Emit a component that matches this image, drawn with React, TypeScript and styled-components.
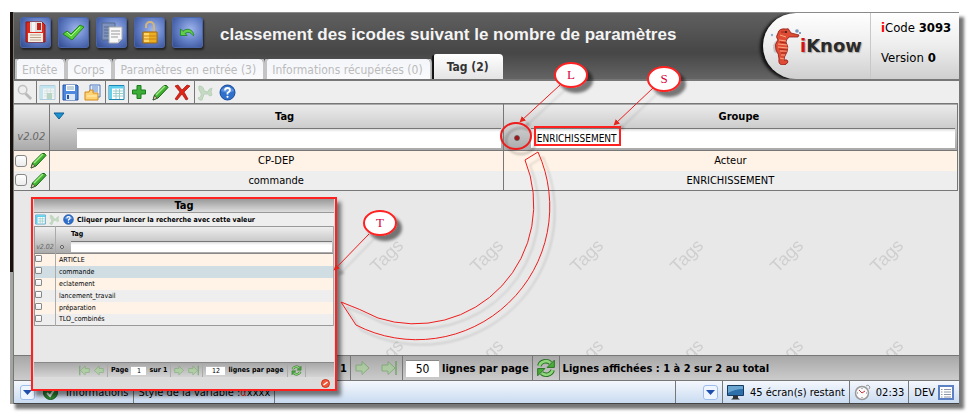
import React from "react";
import styled, { createGlobalStyle, css } from "styled-components";

const UI = '"DejaVu Sans Condensed", "DejaVu Sans", sans-serif';
const LINE = "#777777";

const GlobalStyle = createGlobalStyle`
  *, *::before, *::after { box-sizing: border-box; }
  body { margin: 0; background: #fff; font-family: ${UI}; font-size: 11px; color: #000; }
  button { font: inherit; padding: 0; border: 0; background: none; cursor: pointer; }
  input { font: inherit; margin: 0; }
  svg { display: block; flex: none; }
`;

const Page = styled.main`
  position: relative;
  display: flex;
  min-height: 100vh;
  padding: 12px 15px 14px 10px;
  overflow: hidden;
`;

const Frame = styled.div`
  flex: 1;
  display: flex;
  min-width: 0;
  padding-left: 3px;
  background: linear-gradient(#17100d 0 260px, #a3a5a3 260px);
  box-shadow: 5px 5px 3px #777;
`;

const Window = styled.div`
  flex: 1;
  display: flex;
  flex-direction: column;
  min-width: 0;
  background: #e8e8e8;
  border-left: 1px solid ${LINE};
`;

const Header = styled.header`
  display: flex;
  height: 67px;
  background: linear-gradient(#606060, #464646 60%, #646464);
  border-top: 1px solid #8a8a8a;
`;

const HeaderMain = styled.div`
  flex: 1;
  display: flex;
  flex-direction: column;
  justify-content: space-between;
  min-width: 0;
`;

const Actions = styled.div`
  display: flex;
  align-items: center;
  gap: 7px;
  padding: 4px 0 0 6px;
`;

const ActionButton = styled.button`
  display: grid;
  place-items: center;
  width: 31px;
  height: 31px;
  border-radius: 3px;
  border: 1px solid #4a65a8;
  background: radial-gradient(circle at 60% 40%, #a0b6ec, #6682c8 45%, #30498f);
  box-shadow: 1px 2px 2px #222;
`;

const Title = styled.h1`
  margin: 0 0 0 10px;
  padding-top: 4px;
  font: bold 17px/24px "Liberation Sans", Arial, sans-serif;
  color: #f4f4f4;
  white-space: nowrap;
`;

const Tabs = styled.nav`
  display: flex;
  align-items: flex-end;
  gap: 4px;
  padding-left: 3px;
`;

const Tab = styled.button<{ $active?: boolean }>`
  height: 20px;
  padding: 0 7px 0 5px;
  border-radius: 2px 4px 0 0;
  background: linear-gradient(#f3f5f9, #fbfbfd);
  box-shadow: 0 0 0 2px #c4c4c4;
  clip-path: inset(0 -4px 0 -3px);
  color: #bbb;
  font-family: ${UI};
  font-size: 12px;
  line-height: 22px;
  white-space: nowrap;
  ${(p) =>
    p.$active &&
    css`
      height: 25px;
      padding: 0 14px 0 13px;
      background: linear-gradient(#fff, #e4e4e4);
      box-shadow: -2px 1px 1px #111;
      color: #333;
      font-weight: bold;
      line-height: 24px;
    `}
`;

const Brand = styled.div`
  display: flex;
  align-items: center;
  width: 107px;
  padding-left: 7px;
  border-radius: 33px 0 0 33px;
  background: linear-gradient(#fff, #ededed 50%, #cfcfcf);
  box-shadow: -3px 1px 3px #111;
  clip-path: inset(0 0 0 -8px);
`;

const BrandName = styled.strong`
  font: bold 18px/24px "DejaVu Sans", Verdana, sans-serif;
  color: #2b2b2b;
  margin-left: -1px;
  text-shadow: 1px 1px 1px #aaa;
  b { color: #d31318; }
`;

const Meta = styled.div`
  display: flex;
  flex-direction: column;
  gap: 12px;
  width: 89px;
  padding: 6px 0 0 10px;
  border-left: 1px solid #c8c8c8;
  background: linear-gradient(#fff, #ededed 50%, #cfcfcf);
  line-height: 18px;
  font-size: 13px;
  white-space: nowrap;
  em { font-style: normal; font-weight: bold; color: #f00; }
`;

const Toolbar = styled.div`
  display: flex;
  height: 24px;
  border-top: 2px solid ${LINE};
  background: #eee;
`;

const ToolGroup = styled.div<{ $last?: boolean }>`
  display: flex;
  align-items: center;
  gap: 5px;
  padding: 0 3px 0 2px;
  border-right: ${(p) => (p.$last ? "0" : `1px solid ${LINE}`)};
`;

const IconButton = styled.button<{ $faded?: boolean }>`
  display: grid;
  place-items: center;
  flex: none;
  opacity: ${(p) => (p.$faded ? 0.3 : 1)};
`;

const DataTable = styled.table`
  width: calc(100% - 1px);
  table-layout: fixed;
  border-collapse: collapse;
  border-bottom: 1px solid ${LINE};
  th, td { padding: 0; border-right: 1px solid ${LINE}; }
`;

const NarrowCol = styled.col`
  width: 35px;
`;

const HeadRow = styled.tr`
  height: 47px;
  background: linear-gradient(#ebebeb, #d0d0d0 45%, #aaa);
  border-top: 1px solid ${LINE};
  border-bottom: 1px solid ${LINE};
`;

const VersionCell = styled.th`
  vertical-align: bottom;
  font-weight: normal;
  font-style: italic;
  color: #666;
  line-height: 26px;
`;

const HeadTitle = styled.div`
  display: grid;
  grid-template-columns: 24px 1fr 10px;
  align-items: center;
  height: 23px;
  padding-left: 3px;
`;

const HeadFilter = styled.div`
  display: grid;
  grid-template-columns: 27px 1fr;
  align-items: center;
  padding-right: 2px;
  padding-bottom: 2px;
`;

const FilterInput = styled.input`
  width: 100%;
  height: 20px;
  padding: 0 0 0 6px;
  border: 0;
  border-top: 1px solid #777;
  border-radius: 0;
  background: linear-gradient(#ddd, #fff 3px);
  font-weight: normal;
  font-size: 10px;
`;

const BodyRow = styled.tr<{ $tinted?: boolean }>`
  height: 20px;
  background: ${(p) => (p.$tinted ? "#fff2e6" : "#eee")};
  text-align: center;
`;

const RowTools = styled.div`
  display: flex;
  align-items: center;
  gap: 3px;
  padding-left: 1px;
`;

const CheckBox = styled.input<{ $small?: boolean }>`
  appearance: none;
  width: ${(p) => (p.$small ? 7 : 12)}px;
  height: ${(p) => (p.$small ? 7 : 12)}px;
  border: 1px solid #888;
  border-radius: ${(p) => (p.$small ? 1 : 3)}px;
  background: linear-gradient(#fff, #ececec);
`;

const Canvas = styled.section`
  flex: 1;
  position: relative;
  min-height: 120px;
`;

const Watermark = styled.svg`
  position: absolute;
  inset: 0;
  width: 100%;
  height: 100%;
`;

const Pager = styled.div`
  display: flex;
  height: 25px;
  border-top: 1px solid ${LINE};
  background: linear-gradient(#a8a8a8, #ccc);
  font-weight: bold;
`;

const PagerCell = styled.div<{ $lead?: boolean; $last?: boolean }>`
  display: flex;
  align-items: center;
  justify-content: flex-end;
  gap: ${(p) => (p.$lead ? 0 : 3)}px;
  width: ${(p) => (p.$lead ? "337px" : "auto")};
  padding: 0 3px;
  border-right: ${(p) => (p.$last ? "0" : `1px solid ${LINE}`)};
  white-space: nowrap;
`;

const ArrowPair = styled.div`
  display: flex;
  gap: 10px;
  padding: 0 2px 0 1px;
`;

const CountInput = styled.input<{ $small?: boolean; $narrow?: boolean }>`
  width: 33px;
  height: 17px;
  border: 0;
  border-top: 1px solid #888;
  background: #fff;
  text-align: center;
  padding: 0;
  font-weight: normal;
  font-size: 12px;
  ${(p) =>
    p.$small &&
    css`
      width: ${p.$narrow ? 15 : 19}px;
      height: 9px;
      font-size: 7px;
      border-top-color: #bbb;
    `}
`;

const StatusBar = styled.footer`
  display: flex;
  height: 24px;
  border-top: 1px solid #777;
  border-bottom: 1px solid #444;
  background: linear-gradient(#f5f8fd, #c9dbf1);
`;

const StatusCell = styled.div<{ $grow?: boolean; $last?: boolean; $gap?: number; $pad?: string }>`
  display: flex;
  align-items: center;
  gap: ${(p) => p.$gap ?? 5}px;
  flex: ${(p) => (p.$grow ? "1" : "none")};
  padding: ${(p) => p.$pad ?? "0 4px"};
  border-right: ${(p) => (p.$last ? "0" : `1px solid ${LINE}`)};
  white-space: nowrap;
`;

const DropButton = styled.button`
  display: grid;
  place-items: center;
  width: 15px;
  height: 15px;
  border: 1px solid #9dbdec;
  border-radius: 3px;
  background: #eef5ff;
`;

const Variable = styled.span`
  color: #d22;
`;

const Popup = styled.section`
  position: absolute;
  left: 31px;
  top: 197px;
  width: 306px;
  padding: 0 1px;
  border: 2px solid #ff2020;
  background: #dcdcdc;
  box-shadow: 4px 5px 4px rgba(0, 0, 0, 0.5);
  font-size: 7px;
`;

const PopupTitle = styled.h2`
  margin: 0;
  font-size: 11px;
  line-height: 13px;
  text-align: center;
  background: linear-gradient(#999, #ddd);
`;

const PopupTools = styled.div`
  display: flex;
  align-items: center;
  gap: 3px;
  height: 14px;
  padding-left: 1px;
  border-top: 1px solid #999;
  background: #eee;
  font-weight: bold;
  white-space: nowrap;
`;

const PopupTable = styled(DataTable)`
  width: 100%;
  border: 1px solid #999;
  th, td { border-right-color: #aaa; }
  th { font-weight: normal; }
`;

const PopupNarrowCol = styled.col`
  width: 21px;
`;

const PopupHead = styled.tr`
  height: 27px;
  background: linear-gradient(#eee, #aaa);
  border-bottom: 1px solid #888;
`;

const PopupVersion = styled(VersionCell)`
  line-height: 12px;
`;

const PopupFilter = styled.div`
  display: grid;
  grid-template-columns: 10px 1fr;
  align-items: center;
  justify-items: center;
  gap: 0 4px;
  padding: 0 1px 1px 1px;
  strong { grid-column: 2; justify-self: start; line-height: 14px; }
  input { height: 11px; }
`;

const PopupRow = styled.tr<{ $tone: "peach" | "blue" | "grey" }>`
  height: 12px;
  background: ${(p) => ({ peach: "#fff2e6", blue: "#d0dde2", grey: "#eee" })[p.$tone]};
  td:last-child { padding-left: 3px; }
`;

const PopupBlank = styled.div`
  height: 36px;
  background: #e8e8e8;
`;

const PopupPager = styled.div`
  display: flex;
  align-items: center;
  height: 15px;
  gap: 3px;
  padding-left: 45px;
  border-top: 1px solid #888;
  background: linear-gradient(#a8a8a8, #d4d4d4);
  font-weight: bold;
  white-space: nowrap;
`;

const PopupSep = styled.i`
  width: 1px;
  height: 13px;
  background: #aaa;
`;

const PopupFoot = styled.div`
  display: flex;
  justify-content: flex-end;
  align-items: center;
  height: 12px;
  padding-right: 4px;
`;

const Notes = styled.svg`
  position: absolute;
  left: 0;
  top: 0;
  pointer-events: none;
`;

const FloppyRed = () => (
  <svg width="23" height="23" viewBox="0 0 23 23">
    <path d="M2 1h16l3 3v17H2z" fill="#d92b20" stroke="#93170f" />
    <path d="M6 1h12v10H6z" fill="#ddd" />
    <path d="M8 1h3v10H8z" fill="#f5f5f5" />
    <path d="M13 2h4v7h-4z" fill="#c0241a" />
    <path d="M4 12h15v9H4z" fill="#f6eee3" />
    <path d="M6 14h11M6 16.500h11M6 19h11" stroke="#baa48e" />
  </svg>
);
const Check = () => (
  <svg width="23" height="20" viewBox="0 0 23 20">
    <path d="M1 11l4-3 4 3 9-9 4 2-12 13z" fill="#58d13b" stroke="#21851a" />
    <path d="M5 9l4 4 9-9" fill="none" stroke="#b4f39d" />
  </svg>
);
const Copy = () => (
  <svg width="24" height="24" viewBox="0 0 24 24">
    <path d="M2 2h13v17H2z" fill="#7d93bd" stroke="#56698f" />
    <path d="M4 6h9M4 9h9M4 12h5M4 15h5" stroke="#5a6d93" />
    <path d="M9 6h13v12l-4 4H9z" fill="#f8f8f8" stroke="#aaa" />
    <path d="M11 10h9M11 13h9M11 16h7" stroke="#999" />
    <path d="M22 18h-4v4z" fill="#ccc" />
  </svg>
);
const Lock = () => (
  <svg width="18" height="24" viewBox="0 0 18 24">
    <path d="M5 7V5a4 4 0 018 0v6" fill="none" stroke="#d3b57a" strokeWidth="2" />
    <path d="M2 11h14v11H2z" fill="#eeae21" stroke="#9e670b" />
    <path d="M3 12h5v9H3z" fill="#ffd768" />
    <path d="M2 15h14M2 18h14" stroke="#c98412" />
  </svg>
);
const Undo = () => (
  <svg width="17" height="10" viewBox="0 0 19 12">
    <path d="M1 1v8h8L6.500 6.500Q12 3 16 9q1 1 1-1-2-7-8-6.500Q6 2 4 4z" fill="#62cf49" stroke="#1e7f2a" />
  </svg>
);
const Magnifier = () => (
  <svg width="17" height="17" viewBox="0 0 18 18">
    <circle cx="7" cy="6" r="4.500" fill="#eee" stroke="#555" strokeWidth="1.500" />
    <path d="M10 10l6 6" stroke="#444" strokeWidth="3" />
  </svg>
);
const Grid = ({ size = 17, save = false }: { size?: number; save?: boolean }) => (
  <svg width={size} height={size} viewBox="0 0 17 17">
    <path d="M1 1.500h15v14H1z" fill="#fff" stroke="#1e87b4" />
    <path d="M1.500 2h14v2.500h-14zM1.500 2H4v13H1.500z" fill="#5fd0ee" />
    <path d="M5 7h10M5 9.500h10M5 12h10M8 5v10M11.500 5v10" stroke="#9cc" />
    {save && <path d="M8 9h5v6H8z" fill="#3b9a6a" />}
  </svg>
);
const FloppyBlue = () => (
  <svg width="17" height="17" viewBox="0 0 17 17">
    <path d="M1 1h14l1 1v14H1z" fill="#4d87de" stroke="#2755a5" />
    <path d="M4 1h9v6H4z" fill="#fff" />
    <path d="M5 3h7M5 5h7" stroke="#8ab" />
    <path d="M4 10h9v6H4z" fill="#dce6f3" />
    <path d="M5 11h2v4H5z" fill="#2755a5" />
  </svg>
);
const FolderDoc = () => (
  <svg width="18" height="17" viewBox="0 0 18 17">
    <path d="M6 1h10v12H6z" fill="#e8f1ff" stroke="#4c78bd" />
    <path d="M8 3h6M8 5h6M8 7h6" stroke="#5c8ace" />
    <path d="M1 8h4l1-2h3v3h5v7H1z" fill="#ffd274" stroke="#d4881d" />
    <path d="M3 12h10" stroke="#fff0bd" />
  </svg>
);
const Plus = () => (
  <svg width="16" height="16" viewBox="0 0 16 16">
    <path d="M6 1.500h4v4.500h4.500v4H10v4.500H6V10H1.500V6H6z" fill="#3cae36" stroke="#1b7d20" />
  </svg>
);
const Pencil = () => (
  <svg width="17" height="17" viewBox="0 0 17 17">
    <path d="M1 16l1.500-5L12 1.500Q15 .5 16 3.500L6 14z" fill="#42b330" stroke="#12600f" />
    <path d="M4 11l9-9" stroke="#a1ec85" strokeWidth="1.500" />
    <path d="M1 16l1.500-4L5 14z" fill="#f0dcb8" stroke="#333" strokeWidth=".6" />
  </svg>
);
const Cross = () => (
  <svg width="17" height="17" viewBox="0 0 17 17">
    <path d="M1 2l3-1 4 5 5-5 3 1-6 6 4 7-2 1-4-6-5 6-2-1 5-7z" fill="#e02418" stroke="#9a120c" strokeWidth=".7" />
  </svg>
);
const Wrench = ({ size = 17 }: { size?: number }) => (
  <svg width={size} height={size} viewBox="0 0 17 17">
    <path d="M2 2q5 0 5 5l4 1q0-3 4-4-2 4 0 7l-2 1q-2-3-6-2l-2 6q-3 1-4-2 4-1 3-5-3-3-2-7z" fill="#68ad5c" stroke="#388a42" />
  </svg>
);
const Help = ({ size = 17 }: { size?: number }) => (
  <svg width={size} height={size} viewBox="0 0 17 17">
    <circle cx="8.500" cy="8.500" r="7.500" fill="#2f70cc" stroke="#16489b" />
    <path d="M2 7a7 6 0 0113 0q-6 3-13 0z" fill="#78aaee" opacity=".6" />
    <path d="M6 6.500q0-2.500 2.500-2.500T11 6.300Q11 7.600 8.500 9v1.500" fill="none" stroke="#fff" strokeWidth="1.800" />
    <circle cx="8.500" cy="12.800" r="1.100" fill="#fff" />
  </svg>
);
const SortDown = () => (
  <svg width="12" height="8" viewBox="0 0 12 8">
    <path d="M1 1h10L6 7z" fill="#1d93d2" stroke="#0b5f96" />
  </svg>
);
const Dot = ({ small = false }: { small?: boolean }) => (
  <svg width="8" height="8" viewBox="0 0 8 8">
    <circle cx="4" cy="4" r={small ? 1.5 : 2.5} fill={small ? "#eee" : "#a51118"} stroke="#555" strokeWidth={small ? 1 : 0.7} />
  </svg>
);
const Arrow = ({ size = 16, end = false, back = false }: { size?: number; end?: boolean; back?: boolean }) => (
  <svg width={size} height={size} viewBox="0 0 16 16" opacity=".55">
    <g transform={back ? "matrix(-1 0 0 1 16 0)" : undefined}>
      <path d="M1 5h6V1.500L14 8l-7 6.500V11H1z" fill="#a2d790" stroke="#5c9b4d" />
      {end && <path d="M15 1v14" stroke="#5c9b4d" strokeWidth="2" />}
    </g>
  </svg>
);
const Refresh = ({ size = 18 }: { size?: number }) => (
  <svg width={size} height={size} viewBox="0 0 18 18">
    <path d="M3 7a6 5.500 0 0110-2.500M15 11a6 5.500 0 01-10 2.500" fill="none" stroke="#226d1b" strokeWidth="4" />
    <path d="M3 7a6 5.500 0 0110-2.500M15 11a6 5.500 0 01-10 2.500" fill="none" stroke="#8ed67c" strokeWidth="2.400" />
    <path d="M16.500 2v6.500H10zM1.500 16V9.500H8z" fill="#49ad39" stroke="#226d1b" strokeWidth=".8" />
  </svg>
);
const Caret = () => (
  <svg width="9" height="5" viewBox="0 0 9 5">
    <path d="M0 0h9L4.500 5z" fill="#1f4fae" />
  </svg>
);
const Monitor = () => (
  <svg width="17" height="15" viewBox="0 0 17 15">
    <path d="M.5.500h16v10H.500z" fill="#2d6fa9" stroke="#183a5e" />
    <path d="M1 1h15v3Q8 4 1 8z" fill="#6ba5d1" />
    <path d="M6 11h5v2l2 1.500H4L6 13z" fill="#333" />
  </svg>
);
const Stopwatch = () => (
  <svg width="17" height="17" viewBox="0 0 17 17">
    <path d="M12 2l2-1 2 2-1 2" fill="none" stroke="#999" />
    <circle cx="8" cy="9" r="6.500" fill="#fafafa" stroke="#999" strokeWidth="1.500" />
    <path d="M5 6l3 3 3-2" fill="none" stroke="#c33" />
    <path d="M8 4v1M8 13v1M3 9h1M12 9h1" stroke="#777" />
  </svg>
);
const ListIcon = () => (
  <svg width="16" height="15" viewBox="0 0 16 15">
    <path d="M1 1h14v13H1z" fill="#fff" stroke="#5b80c4" strokeWidth="2" />
    <path d="M3 4.500h1.500M6 4.500h7M3 7h1.500M6 7h7M3 9.500h1.500M6 9.500h7M3 12h1.500M6 12h7" stroke="#8c96a8" />
  </svg>
);
const Ok = () => (
  <svg width="15" height="15" viewBox="0 0 15 15">
    <circle cx="7.500" cy="7.500" r="7" fill="#2f8b35" stroke="#195a20" />
    <path d="M4 8l3 3 4-6" fill="none" stroke="#fff" strokeWidth="2" />
  </svg>
);
const Forbidden = () => (
  <svg width="9" height="9" viewBox="0 0 9 9">
    <circle cx="4.500" cy="4.500" r="4" fill="#f05a3c" stroke="#c93318" />
    <path d="M2.500 6l4-3" stroke="#fff" strokeWidth="1.300" />
  </svg>
);
const Seahorse = () => (
  <svg width="31" height="38" viewBox="0 0 31 38">
    <path d="M7 13Q1 17 4 25q3 2 6 0z" fill="#aaa" opacity=".6" />
    <path
      d="M8 6Q9 1 16 2q3-1 3 1l2 3 8 2-1 2-9 0q-3 3-3 5 3 5 1 10-3 5-3 8 4-1 4 2-1 3-6 3-4-1-3-6 0-5-3-9-2-6 2-10-3-3 0-7z"
      fill="#df4c35"
      stroke="#8e1b17"
      strokeWidth=".8"
    />
    <path d="M10 8l6 2M9 13l7 1M8 17l9 1M8 20l10 1M10 24l7 0M11 28l4 0M10 31l4 1" stroke="#ffb083" strokeWidth=".9" />
    <path d="M11 5l5 0M10 15l6 1M9 22l8 1M11 26l5 0" stroke="#961f19" strokeWidth=".8" />
    <circle cx="16" cy="5" r="1" fill="#222" />
    <circle cx="2" cy="8" r="1.200" fill="#90afd1" />
    <circle cx="27" cy="4" r="1.800" fill="#7797bd" />
    <circle cx="30" cy="6" r="1" fill="#5d82b0" />
  </svg>
);

type Item = { label: string; icon: React.ReactNode; faded?: boolean };

const actions: Item[] = [
  { label: "Enregistrer", icon: <FloppyRed /> },
  { label: "Valider", icon: <Check /> },
  { label: "Copier", icon: <Copy /> },
  { label: "Verrouiller", icon: <Lock /> },
  { label: "Retour", icon: <Undo /> },
];

const toolGroups: Item[][] = [
  [{ label: "Rechercher", icon: <Magnifier />, faded: true }],
  [{ label: "Exporter", icon: <Grid save />, faded: true }],
  [
    { label: "Sauvegarder", icon: <FloppyBlue /> },
    { label: "Ouvrir", icon: <FolderDoc /> },
  ],
  [{ label: "Colonnes", icon: <Grid /> }],
  [
    { label: "Ajouter", icon: <Plus /> },
    { label: "Modifier", icon: <Pencil /> },
    { label: "Supprimer", icon: <Cross /> },
  ],
  [
    { label: "Outils", icon: <Wrench />, faded: true },
    { label: "Aide", icon: <Help /> },
  ],
];

const tabs = ["Entête", "Corps", "Paramètres en entrée (3)", "Informations récupérées (0)"];

const rows = [
  ["CP-DEP", "Acteur"],
  ["commande", "ENRICHISSEMENT"],
];

const values: [string, "peach" | "blue" | "grey"][] = [
  ["ARTICLE", "peach"],
  ["commande", "blue"],
  ["eclatement", "peach"],
  ["lancement_travail", "grey"],
  ["préparation", "peach"],
  ["TLO_combinés", "grey"],
];

const bubbles = [
  { letter: "L", x: 571, y: 75, line: "M560 85L521 121" },
  { letter: "S", x: 664, y: 79, line: "M653 88L615 124" },
  { letter: "T", x: 380, y: 223, line: "M369 234L335 269" },
];

const Annotations = () => (
  <Notes width="974" height="418" viewBox="0 0 974 418">
    <defs>
      <filter id="cast" x="-30%" y="-30%" width="180%" height="180%">
        <feDropShadow dx="5" dy="5" stdDeviation="1.500" floodColor="#000" floodOpacity=".5" />
      </filter>
      <filter id="soft" x="-30%" y="-30%" width="180%" height="180%">
        <feDropShadow dx="5" dy="5" stdDeviation="1" floodColor="#000" floodOpacity=".22" />
      </filter>
      <marker id="tip" markerUnits="userSpaceOnUse" markerWidth="8" markerHeight="8" refX="4" refY="3" orient="auto">
        <path d="M0 0L6 3L0 6z" fill="#e8201a" />
      </marker>
    </defs>
    <g fill="none" stroke="#ee1c1c" filter="url(#soft)">
      <path d="M525 160A119 119 0 0 1 378 318Q360 309 341 302L356 325A133 133 0 0 0 538 152Z" />
      {bubbles.map((b) => (
        <path key={b.letter} d={b.line} markerEnd="url(#tip)" />
      ))}
      <ellipse cx="516" cy="136" rx="15" ry="13" strokeWidth="2" />
    </g>
    <rect x="535" y="127" width="85" height="18" fill="none" stroke="#ff2020" strokeWidth="2" />
    {bubbles.map((b) => (
      <g key={b.letter}>
        <ellipse cx={b.x} cy={b.y} rx="16" ry="12" fill="#fff" stroke="#ff2020" strokeWidth="2" filter="url(#cast)" />
        <text x={b.x} y={b.y + 4} textAnchor="middle" fontFamily='"Liberation Serif", serif' fontSize="13" fill="#d8003c">
          {b.letter}
        </text>
      </g>
    ))}
  </Notes>
);

const SearchPopup = () => (
  <Popup aria-label="Tag">
    <PopupTitle>Tag</PopupTitle>
    <PopupTools>
      <IconButton aria-label="Colonnes"><Grid size={11} /></IconButton>
      <IconButton aria-label="Outils" $faded><Wrench size={11} /></IconButton>
      <IconButton aria-label="Aide"><Help size={11} /></IconButton>
      <span>Cliquer pour lancer la recherche avec cette valeur</span>
    </PopupTools>
    <PopupTable>
      <colgroup><PopupNarrowCol /><col /></colgroup>
      <thead>
        <PopupHead>
          <PopupVersion>v2.02</PopupVersion>
          <th>
            <PopupFilter>
              <strong>Tag</strong>
              <IconButton aria-label="Mode de recherche"><Dot small /></IconButton>
              <FilterInput aria-label="Filtrer les valeurs" />
            </PopupFilter>
          </th>
        </PopupHead>
      </thead>
      <tbody>
        {values.map(([name, tone]) => (
          <PopupRow key={name} $tone={tone}>
            <td><CheckBox $small type="checkbox" aria-label={name} /></td>
            <td>{name}</td>
          </PopupRow>
        ))}
      </tbody>
    </PopupTable>
    <PopupBlank />
    <PopupPager>
      <IconButton aria-label="Première page"><Arrow size={11} back end /></IconButton>
      <IconButton aria-label="Page précédente"><Arrow size={11} back /></IconButton>
      <PopupSep />
      <span>Page</span>
      <CountInput $small $narrow aria-label="Page" defaultValue="1" />
      <span>sur 1</span>
      <PopupSep />
      <IconButton aria-label="Page suivante"><Arrow size={11} /></IconButton>
      <IconButton aria-label="Dernière page"><Arrow size={11} end /></IconButton>
      <PopupSep />
      <CountInput $small aria-label="Lignes par page" defaultValue="12" />
      <span>lignes par page</span>
      <PopupSep />
      <IconButton aria-label="Actualiser"><Refresh size={11} /></IconButton>
      <PopupSep />
    </PopupPager>
    <PopupFoot>
      <IconButton aria-label="Fermer"><Forbidden /></IconButton>
    </PopupFoot>
  </Popup>
);

export default function App() {
  return (
    <Page>
      <GlobalStyle />
      <Frame>
        <Window>
          <Header>
            <HeaderMain>
              <Actions>
                {actions.map((a) => (
                  <ActionButton key={a.label} aria-label={a.label}>{a.icon}</ActionButton>
                ))}
                <Title>classement des icodes suivant le nombre de paramètres</Title>
              </Actions>
              <Tabs>
                {tabs.map((t) => <Tab key={t}>{t}</Tab>)}
                <Tab $active>Tag (2)</Tab>
              </Tabs>
            </HeaderMain>
            <Brand>
              <Seahorse />
              <BrandName><b>i</b>Know</BrandName>
            </Brand>
            <Meta>
              <span><em>i</em>Code <b>3093</b></span>
              <span>Version <b>0</b></span>
            </Meta>
          </Header>
          <Toolbar>
            {toolGroups.map((group, i) => (
              <ToolGroup key={i} $last={i === toolGroups.length - 1}>
                {group.map((t) => (
                  <IconButton key={t.label} aria-label={t.label} $faded={t.faded}>{t.icon}</IconButton>
                ))}
              </ToolGroup>
            ))}
          </Toolbar>
          <DataTable>
            <colgroup><NarrowCol /><col /><col /></colgroup>
            <thead>
              <HeadRow>
                <VersionCell>v2.02</VersionCell>
                <th>
                  <HeadTitle><SortDown /><span>Tag</span></HeadTitle>
                  <HeadFilter><span /><FilterInput aria-label="Filtrer par tag" /></HeadFilter>
                </th>
                <th>
                  <HeadTitle><span /><span>Groupe</span></HeadTitle>
                  <HeadFilter>
                    <IconButton aria-label="Liste des valeurs"><Dot /></IconButton>
                    <FilterInput aria-label="Filtrer par groupe" defaultValue="ENRICHISSEMENT" />
                  </HeadFilter>
                </th>
              </HeadRow>
            </thead>
            <tbody>
              {rows.map(([tag, group], i) => (
                <BodyRow key={tag} $tinted={i % 2 === 0}>
                  <td>
                    <RowTools>
                      <CheckBox type="checkbox" aria-label={`Sélectionner ${tag}`} />
                      <IconButton aria-label={`Modifier ${tag}`}><Pencil /></IconButton>
                    </RowTools>
                  </td>
                  <td>{tag}</td>
                  <td>{group}</td>
                </BodyRow>
              ))}
            </tbody>
          </DataTable>
          <Canvas>
            <Watermark aria-hidden="true">
              <defs>
                <pattern id="tags" width="100" height="100" patternUnits="userSpaceOnUse">
                  <text transform="translate(77 69) rotate(-45)" textAnchor="middle" fontFamily='"Liberation Sans", sans-serif' fontSize="18" fill="#cfcfcf">
                    Tags
                  </text>
                </pattern>
              </defs>
              <rect width="100%" height="100%" fill="url(#tags)" />
            </Watermark>
          </Canvas>
          <Pager>
            <PagerCell $lead>1</PagerCell>
            <PagerCell>
              <ArrowPair>
                <IconButton aria-label="Page suivante"><Arrow /></IconButton>
                <IconButton aria-label="Dernière page"><Arrow end /></IconButton>
              </ArrowPair>
            </PagerCell>
            <PagerCell>
              <CountInput id="per-page" defaultValue="50" />
              <label htmlFor="per-page">lignes par page</label>
            </PagerCell>
            <PagerCell>
              <IconButton aria-label="Actualiser"><Refresh size={20} /></IconButton>
            </PagerCell>
            <PagerCell $last>Lignes affichées : 1 à 2 sur 2 au total</PagerCell>
          </Pager>
          <StatusBar>
            <StatusCell $gap={8} $pad="0 5px 0 6px">
              <DropButton aria-label="Messages"><Caret /></DropButton>
              <Ok />
              <span>Informations</span>
            </StatusCell>
            <StatusCell>
              <span>Style de la variable :<Variable>α</Variable>xxxx</span>
            </StatusCell>
            <StatusCell $grow />
            <StatusCell $pad="0 4px 0 27px">
              <DropButton aria-label="Écrans"><Caret /></DropButton>
            </StatusCell>
            <StatusCell $gap={6}><Monitor /><span>45 écran(s) restant</span></StatusCell>
            <StatusCell><Stopwatch /><span>02:33</span></StatusCell>
            <StatusCell $last $gap={3} $pad="0 5px"><span>DEV</span><ListIcon /></StatusCell>
          </StatusBar>
        </Window>
      </Frame>
      <SearchPopup />
      <Annotations />
    </Page>
  );
}
